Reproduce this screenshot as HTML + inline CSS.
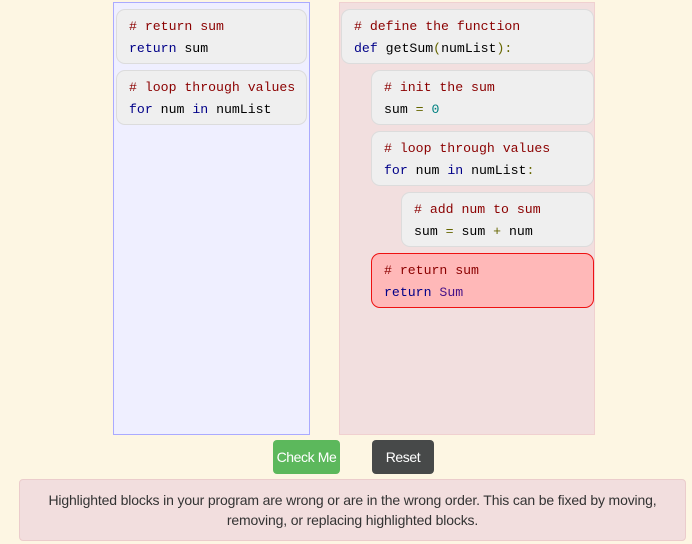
<!DOCTYPE html>
<html><head><style>
body{margin:0;width:692px;height:544px;background:#fdf6e3;position:relative;overflow:hidden;font-family:"Liberation Sans",sans-serif}
.col{position:absolute;top:2px;height:433px;box-sizing:border-box}
.l{left:113px;width:197px;background:#efefff;border:1px solid #aaaaff}
.r{left:339px;width:256px;background:#f2dfdf;border:1px solid #f0d0d0}
.b{position:absolute;height:55px;box-sizing:border-box;background:#efefef;border:1px solid #dcdcdc;border-radius:9px;padding:6px 0 0 12px;font-family:"Liberation Mono",monospace;font-size:13.2px;line-height:22px;color:#000;white-space:pre}
.c{color:#8b0000}.k{color:#000088}.n{color:#008080}.o{color:#666600}
.bad{background:#ffb8b8;border-color:#ee1111}
.btn{position:absolute;top:440px;height:34px;border-radius:4px;color:#fff;font-size:14px;line-height:34px;text-align:center;letter-spacing:-0.4px}
.alert{position:absolute;left:19px;top:479px;width:667px;height:62px;box-sizing:border-box;background:#f2dede;border:1px solid #ebcccc;border-radius:4px;color:#333;font-size:14px;line-height:20px;text-align:center;padding-top:10px;letter-spacing:-0.15px}
</style></head><body>
<div class="col l"></div>
<div class="col r"></div>
<div class="b" style="left:116px;top:9px;width:191px"><span class="c"># return sum</span>
<span class="k">return</span> sum</div>
<div class="b" style="left:116px;top:70px;width:191px"><span class="c"># loop through values</span>
<span class="k">for</span> num <span class="k">in</span> numList</div>
<div class="b" style="left:341px;top:9px;width:253px"><span class="c"># define the function</span>
<span class="k">def</span> getSum<span class="o">(</span>numList<span class="o">):</span></div>
<div class="b" style="left:371px;top:70px;width:223px"><span class="c"># init the sum</span>
sum <span class="o">=</span> <span class="n">0</span></div>
<div class="b" style="left:371px;top:131px;width:223px"><span class="c"># loop through values</span>
<span class="k">for</span> num <span class="k">in</span> numList<span class="o">:</span></div>
<div class="b" style="left:401px;top:192px;width:193px"><span class="c"># add num to sum</span>
sum <span class="o">=</span> sum <span class="o">+</span> num</div>
<div class="b bad" style="left:371px;top:253px;width:223px"><span class="c"># return sum</span>
<span class="k">return</span> <span style="color:#441188">Sum</span></div>
<div class="btn" style="left:273px;width:67px;background:#5cb85c">Check Me</div>
<div class="btn" style="left:372px;width:62px;background:#474949">Reset</div>
<div class="alert">Highlighted blocks in your program are wrong or are in the wrong order. This can be fixed by moving,<br>removing, or replacing highlighted blocks.</div>
</body></html>
